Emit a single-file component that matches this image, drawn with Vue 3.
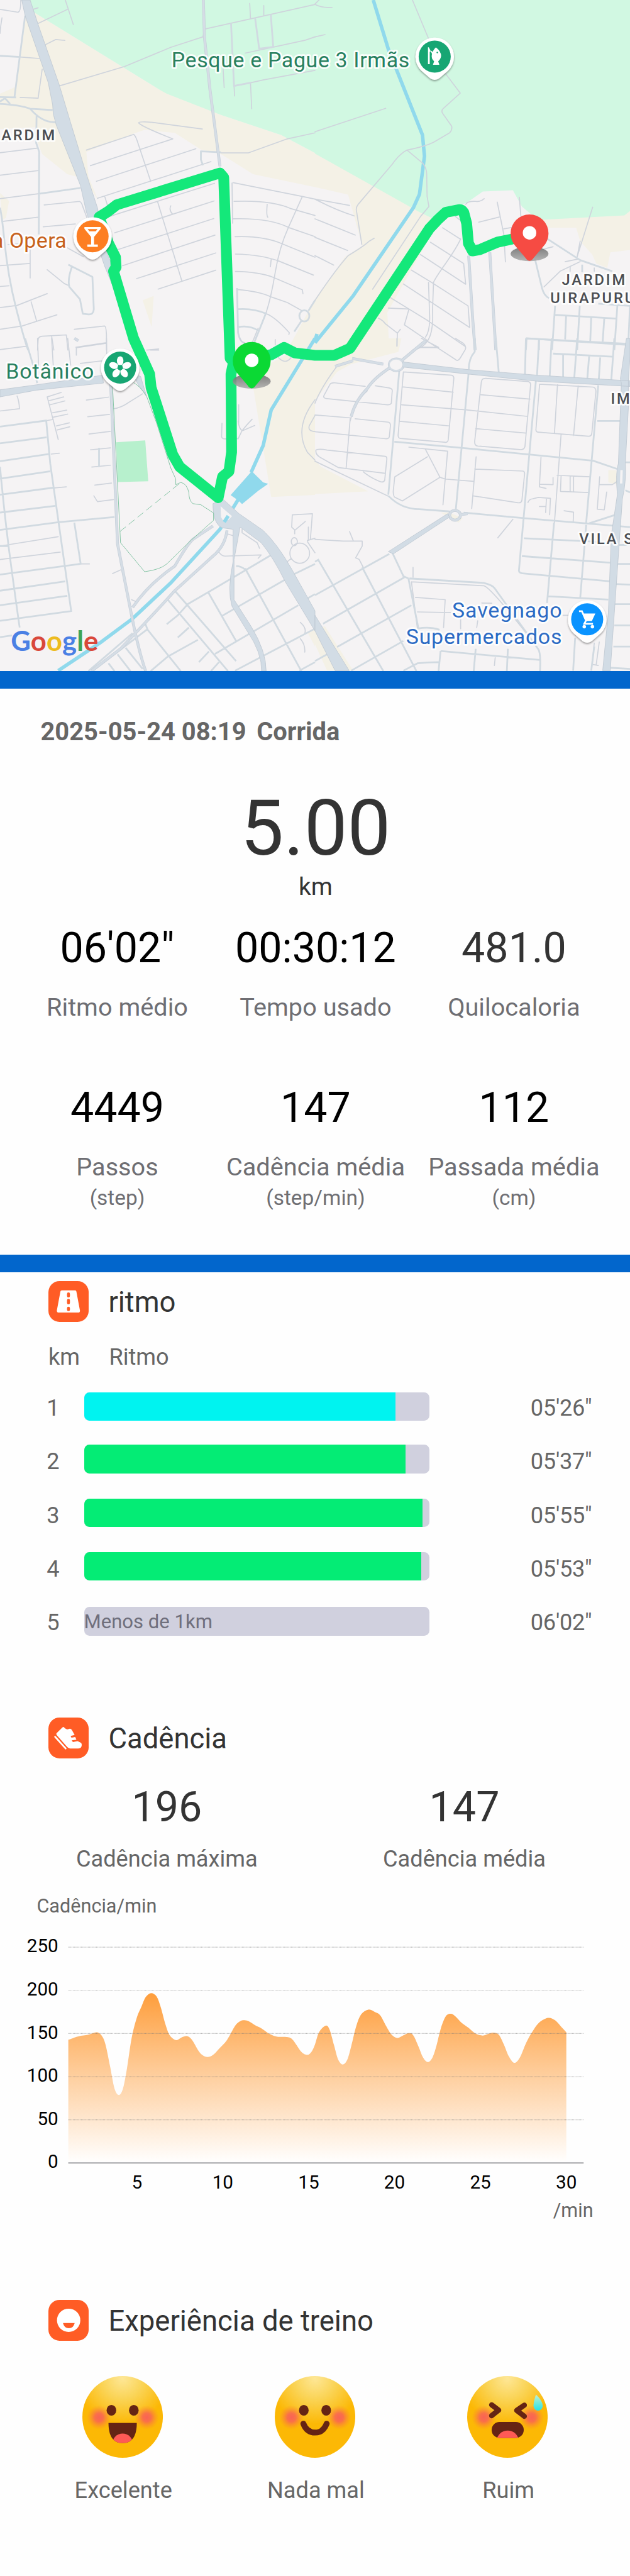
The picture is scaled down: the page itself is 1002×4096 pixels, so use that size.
<script setup>
const TILE_X = 1568 / 540
const TILE_Y = 1568 / 600

// Street network, split into four quadrants with their own drawing grid.
const quadrants = [
  {
    x: 0, y: 0,
    beige: 'M130 60L160 50L250 100L800 405L1100 515L1400 605L1568 685V838L1260 780L1100 690L1000 670L870 595L720 582L660 600L430 680L440 790L490 900L420 800L335 780L210 690L188 640L180 570L0 578V420L75 390L110 200Z M0 865L45 900L30 975L12 985Z M710 1345L765 1325L755 1465Z M1430 1568L1568 1340V1568Z',
    green: 'M150 0L160 50L250 100L800 405L830 420L1100 515L1400 605L1568 685V0Z',
    park: '',
    water: '', pond: '',
    thin: 'M0 42L90 55Q105 50 103 0M325 0L365 110M190 105L335 42M165 42L190 35M220 203L278 177L323 181M298 384L620 298L850 212L1010 165L1020 130L1270 80L1568 20M1243 15L1247 85M1313 25V70M1220 238L1365 210L1520 180L1568 165M1165 385L1250 370L1310 358L1568 315M1110 300L1116 393M1165 385L1168 430M1247 372L1253 487M690 550Q692 543 760 548L1007 578M690 550Q700 565 860 622L450 742M430 672L665 602Q675 605 690 650L750 812M480 812L975 666M485 888L1050 724M522 882L535 920M550 968L1068 821M570 1043L1066 900M590 1117L1064 979M610 1190L1070 1053M680 1248L1074 1133M787 1295L1074 1210M785 905L905 1258M850 922Q840 940 858 958M1160 818L1505 880L1568 892M1155 820L1158 1000M1165 902Q1350 895 1450 935L1568 965M1505 880L1435 1020Q1390 1110 1370 1220T1325 1400M1160 980Q1340 975 1440 1020L1568 1060M1170 1060Q1310 1055 1405 1092L1568 1152M1172 1138Q1300 1140 1390 1170L1560 1232M1172 1216Q1290 1218 1360 1242L1505 1298L1508 1315M1180 1297Q1290 1305 1350 1330L1430 1355L1500 1390M1330 915Q1325 965 1333 973M1350 1160L1346 1195M1325 1405Q1370 1420 1440 1490L1438 1498M1100 685H1235L1430 622L1568 595M0 684L190 663M0 785L190 764M0 890L190 868M10 992L190 973M40 1095L100 1092M215 1016L375 1003M220 918L395 902Q405 903 412 925L445 1005M0 1190L150 1180M150 1110V1245M0 1283L45 1280M0 1378L85 1368L235 1315M155 1352L182 1437M0 1475L110 1460L283 1410M235 1208L320 1270L340 1278M370 1475L520 1460Q528 1460 530 1500V1568M187 1568L190 1520Q193 1507 210 1506L330 1500L338 1568M257 1506L268 1568M378 1555L530 1535M190 440L100 436M190 438L210 310M100 255L195 262M335 1110L415 1150M1255 1536L1285 1470M750 1568H790M10 80Q2 120 0 150',
    minor: 'M125 70L72 435M0 250L100 255M0 435L80 436M25 440L50 465M0 455L25 440M0 465Q100 470 150 487L262 493M150 487Q210 550 275 547M182 520L180 640L195 680L193 1050M193 868L400 842M1150 105L1165 385L1250 370M1270 82L1290 218L1360 210L1348 65M1100 682L1000 678V715L1010 740M340 1185L460 1240L467 1385Q465 1410 440 1408L412 1405L398 1340L345 1285Q335 1250 360 1190M0 930Q10 970 22 1080Q40 1240 80 1380T140 1568M1180 1290L1185 1490Q1195 1535 1220 1536M1325 1400Q1290 1480 1265 1535M1185 1385Q1260 1380 1325 1405M1185 1465Q1240 1455 1285 1480M1490 1415A25 25 0 1 1 1540 1415A25 25 0 1 1 1490 1415M1535 1392L1568 1345M1500 1438L1465 1485',
    road: 'M1012 0L1018 170L1045 400L1095 745',
    highway: 'M108 0H150L190 110L295 380L350 545L430 780L485 930L530 1130L600 1270L570 1300L520 1190L430 950L400 830L280 560L265 510L262 470L240 370L125 70Z'
  },
  {
    x: 540, y: 0,
    beige: 'M0 680L520 945L592 980L560 1080L360 1400L370 1568H0V1340L150 1150L235 1100L165 872L0 838Z M1100 984L1150 1020H1300L1320 1080L1380 1140L1400 1180L1455 1200L1470 1130L1568 1120V945Z',
    green: 'M0 0V688L520 950L590 980L760 905L835 858L985 852L1030 925L1110 985L1540 965L1568 945V0Z',
    park: '',
    water: 'M290 0L365 220L535 605L545 700L520 870L490 930L190 1325L0 1535', pond: '',
    thin: 'M485 0L580 205M650 330L723 417L640 485Q625 495 637 510L680 565Q685 580 670 595L590 637Q550 655 458 672M458 672Q420 690 385 735L215 915Q203 930 206 942L233 1095M458 672L535 730Q555 750 556 780L558 880L567 925L525 970L287 1295M295 1067L270 1080Q240 1105 165 1145Q100 1210 0 1345M0 590L352 485M0 165L50 155M0 18L20 0M0 20Q30 35 85 34M0 892L172 920M0 892Q100 940 195 967M0 980L200 1053M0 1063L162 1122M0 1145L93 1187M750 915Q760 900 800 902Q825 905 842 890M815 995L917 972M907 905L940 1050L948 1173M940 1025L985 1018M1017 883L1025 970M700 970L720 985M635 1020L725 1072M575 1085L740 1180L750 1273L525 1140M480 1210L580 1265L762 1370L770 1467L440 1272M370 1330L560 1435L745 1550M365 1380L468 1384L445 1455L560 1525M315 1425Q340 1435 350 1450L410 1492L425 1475M410 1492L408 1550M725 1070Q705 1110 650 1180T590 1265L585 1390Q590 1480 565 1520T485 1568M565 1265L570 1400Q575 1480 550 1510M1382 928L1305 1150M1320 1080L1305 1150M1185 1105Q1100 1120 1090 1150M1245 1172L1310 1160M1140 1285L1220 1215L1320 1172M1270 1195V1215M1390 1200V1215M520 1555L615 1557',
    minor: 'M1140 1060L1320 1165L1480 1215M1095 1160L1130 1290Q1140 1325 1165 1335M1330 1185V1220M1195 1370L1180 1568M1318 1370L1305 1568M1505 1370L1490 1568M1195 1410L1500 1427M1250 1415L1245 1520M1375 1420L1370 1530M1440 1425L1432 1530M1050 1568L1053 1515L1568 1545M1115 1520V1568M1410 1360L1568 1370M1568 1370L1558 1568',
    road: 'M765 1145L785 1430L797 1568M870 1130L900 1568',
    highway: ''
  },
  {
    x: 0, y: 580,
    beige: 'M1350 110L1568 0V701L1350 710L1255 190Z M1530 1315L1568 1300V1380Z',
    green: '',
    park: 'M578 465L723 457L738 640L587 643Z',
    water: 'M1568 0L1350 320L1310 480L1250 600M1190 715L1095 855L850 1095L660 1255L500 1362L290 1488',
    pond: 'M1148 702L1253 595L1310 645L1335 651L1285 683L1205 742L1185 725Z',
    thin: 'M0 50L130 35M187 0L192 130M257 0L265 120M337 0L352 120M380 75V42L528 22M530 0L533 165M400 112L533 98M0 325L97 315Q95 280 85 258M305 242L235 262L290 453M240 280L317 262M250 297L323 280M262 333L332 321M265 353L337 339M280 392L345 378M285 410L347 396M430 276L540 263M437 351L545 340M443 428L550 416M450 499L550 490M457 576L550 568M472 657L555 648M467 705L485 731L565 722M255 518L295 514M270 670L330 665M232 368L265 363M390 1010L445 1010M560 1053L600 1037M565 315Q605 310 640 287L710 248M1188 297V380M1105 380L1103 440Q1105 450 1122 450L1185 448M1185 370Q1190 405 1205 413Q1230 385 1255 362M1205 413L1185 450M1208 413L1268 390M1568 275Q1460 400 1530 510L1568 545M1568 345L1540 390Q1530 415 1568 417M1455 790L1555 785L1545 900M1520 820L1467 860V875M1455 790L1452 845L1467 858M1535 845V905M1450 910A15 18 0 1 0 1480 910A15 18 0 1 0 1450 910M1443 962A49 45 0 1 0 1541 962A49 45 0 1 0 1443 962M1430 1000L1450 985M1530 905L1568 895M1530 910L1568 960M1205 855V870L1280 915L1292 940M1085 950Q1100 975 1120 975L1300 970L1285 985M1370 5V30M1385 85Q1420 120 1450 85M730 52L790 47M0 930L290 888M0 990L300 957M1495 1272Q1530 1300 1515 1325M1495 1345Q1520 1370 1517 1405M655 1170L680 1180M1130 875L1165 885M1195 0Q1195 20 1240 25',
    minor: 'M125 0L165 120L185 200M0 395L230 368L250 560L355 1225M0 470L232 443M0 550L250 517M0 628L250 595M0 700L270 668M0 780L275 750M0 858L290 823L570 800M0 1058L400 1010M370 825L402 1012M0 1130L325 1088M0 1195L335 1153M0 1265L350 1222M0 1338L60 1330M0 575Q25 820 60 1050T98 1295M0 930H40M493 490V576M440 1490L660 1320M460 1490L730 1305M720 1270L735 1305L900 1490M585 1415L650 1490M540 1455L570 1490M625 1385L710 1480M750 1490L835 1425L985 1350M830 1165L1135 1490M870 1130L1175 1445M830 1280L885 1240L935 1190L1040 1135L1350 970M885 1340L940 1295M990 1450L1040 1402M1050 1490L1090 1450M1035 1135L1175 1355M1220 1030L1500 1490M1105 1243L1420 1080M1070 1413L1485 1195M1170 1488L1568 1300M1465 1055L1568 1010M1520 1170L1568 1145M1490 1488L1568 1450M1175 1020Q1200 1020 1220 1035',
    road: 'M550 180L585 920Q620 1080 655 1240T725 1490M660 1205Q740 1100 870 1020Q930 925 960 900L1060 840M455 1490L600 1390Q760 1240 870 1130L1060 975Q1120 930 1130 860M370 0L390 10',
    highway: 'M0 230L180 208L510 165L515 200L180 232L0 262Z M1060 740L1110 720L1190 785L1310 860Q1380 920 1450 1030L1568 1220V1310L1420 1090Q1360 980 1300 915L1195 845L1165 990L1165 1170L1250 1290Q1325 1400 1325 1490H1302Q1305 1410 1230 1310L1155 1200Q1130 1130 1160 1000V855L1105 848Q1060 830 1060 740Z M660 160L700 170L730 260L690 210Z',
    light: 'M1098 752L1155 796L1138 812L1112 818L1100 800Z',
    creek: 'M1136 795L1116 822'
  },
  {
    x: 540, y: 580,
    beige: 'M0 0H430L415 60L180 115L110 150L0 280Z M0 545L30 575L265 685L0 697Z M1460 590L1500 590L1505 655L1460 645Z M50 1290L190 1488H60L0 1370V1300Z M625 780L670 780L735 805L715 825Z',
    green: '', park: '', pond: '',
    water: 'M0 10L10 -20',
    thin: 'M408 0V35M555 10L700 95Q712 105 725 85L748 50Q755 35 735 20L700 0M525 40H615L530 0M0 290Q30 220 105 130M75 205Q80 198 100 199L250 215M300 212L370 222Q388 225 384 240L380 290Q375 298 360 297L60 270Q38 268 45 255L75 205M0 343L178 356M200 360L365 375Q378 378 375 395L370 440Q368 450 350 449L0 418M175 360L155 580M260 235Q200 280 175 370M5 500Q0 520 30 535L115 578L350 604M5 500Q20 493 60 500L350 528Q360 530 357 545L347 635Q340 648 320 640Q270 620 240 597M0 550L365 707M440 150L680 165Q692 168 691 180L663 455Q660 468 645 465L425 448Q412 446 414 430L440 150M435 217L688 241M430 297L750 320L1055 349M422 371L670 392M828 195Q830 178 850 179L1060 193Q1075 196 1073 210L1045 485Q1040 500 1020 498L810 482Q793 480 795 460L828 195M825 252L1070 272M800 404L1050 424M1118 205L1385 218Q1400 222 1398 240L1378 425Q1375 440 1360 438L1110 420Q1098 418 1100 405L1118 205M1207 208L1192 425M1310 213L1287 435M1225 430L1192 825M467 487L660 505L637 745M550 497L622 622L435 728L395 710Q388 700 390 680L397 620L560 530M622 622L648 630L790 640M802 530L780 762M795 585L1035 594Q1045 596 1043 610L1030 725Q1027 738 1010 736L785 705M985 810L910 893M1125 533L1117 665L1150 672M1117 653L1185 655V623M1205 613L1368 620M1225 615L1222 685L1360 690M1270 618V685M1287 618V688M1060 735Q1065 720 1085 718L1112 712L1172 716L1168 790M1152 718L1148 780M1117 753H1150M1240 772L1287 778L1285 825M1417 620L1405 765L1440 768L1452 688M1417 655L1480 655L1505 640M172 865L190 905M0 900L140 908L235 908V930L202 983L220 990L240 1025M488 1025V1070M500 1160L648 1170L640 1295M510 1225L675 1228M480 1090L840 1108Q870 1112 1060 1330M480 1090L510 1300M725 1245V1300M810 1265L805 1295M830 1185L880 1186M897 1430L893 1465M1390 1365L1380 1460L1410 1465M1415 1360L1400 1460M1235 1240H1260',
    minor: 'M797 0L795 60Q765 90 765 140M900 0L915 155M1050 0L1045 165M1115 5L1105 170M1178 0L1168 175M1235 70V175M1305 0L1290 185M1365 75L1355 185M1420 85L1412 190M1490 0L1475 185M1050 0L1568 25M1185 68L1480 82M1405 370L1520 370M1410 210L1350 825M420 140L365 700M395 463L730 490L1385 548L1505 585M765 150L700 775M1100 185L1015 1040Q1015 1052 1040 1053L1470 1088M365 705Q430 765 520 765L670 775M740 780L1040 805L1568 845M1365 828L1495 790M1040 895L1500 915M1030 975L1475 1005M1190 825L1155 1185M1350 835L1320 1165M1160 1155L1460 1170M1500 925H1568M1500 1010H1568M1495 1100L1568 1103M1490 1190H1568M1490 1285H1568M1485 1380H1568M1470 1475L1568 1480M0 1150L370 965M385 960L440 1065L465 1075M470 1075L840 1095Q885 1105 895 1120L1110 1390Q1125 1405 1120 1490M465 1075L515 1300M15 990L340 1490M0 1000L20 990M235 1025L505 1490M40 1278L445 1070M110 1382L480 1195M0 1445L60 1415M180 1488L440 1355M440 1488L510 1455Q560 1450 615 1450M615 1490L625 1400M625 1400L1120 1440M800 1390L790 1490M960 1390L955 1490M510 1300Q570 1290 620 1305M1295 1340L1285 1488M1390 1380L1375 1488M1545 555H1568M1545 680L1568 690',
    road: 'M185 90L340 115M435 115L560 125M375 130Q290 180 260 225Q200 280 180 350M430 100L550 10M100 125L190 100M370 118A35 26 0 1 1 440 118A35 26 0 1 1 370 118M670 792A27 22 0 1 1 724 792A27 22 0 1 1 670 792M720 790L760 785',
    highway: 'M435 105L765 140L1110 165L1568 190V215L1110 192L765 160L435 128Z M0 1240L170 1488H100L0 1310Z M365 955L660 785L670 800L390 965Z M1550 0H1568V80L1560 190V310L1545 560Q1550 640 1530 720L1490 1230L1470 1488H1432L1460 1230L1475 880L1505 700Q1495 600 1510 560L1525 200L1520 180Z',
    light: 'M1520 590L1532 590L1530 650L1518 650Z M372 118A32 23 0 1 1 436 118A32 23 0 1 1 372 118Z'
  }
]

const tileTransform = q => `translate(${q.x} ${q.y}) scale(${1 / TILE_X} ${1 / TILE_Y})`

const route = 'M877 410L853 415L822 428L810 430L803 417L800 383L795 364Q791 358 784 360L764 364L750 377L736 392L600 597L573 609H540L506 605L487 595.5L465 608L430 613M400 622L396 641L397 775L392.5 808L381.5 817L374 853L308 800L296 779L259 664L256.5 641L229 580L194.600 465L199 458L198 441L186 417L170 372L186 362L200 351L377 296.500L383.500 304L394 600L394.500 614L400 620'

const pois = [
  { x: 745.2, y: 97, color: '#17a673', kind: 'fish' },
  { x: 158.7, y: 405, color: '#fd7e22', kind: 'bar' },
  { x: 206, y: 630, color: '#17a673', kind: 'flower' },
  { x: 1006.6, y: 1061.500, color: '#0a93ff', kind: 'cart' }
]

const markers = [
  { x: 431.5, y: 619.500, color: '#0bd934' },
  { x: 907.8, y: 401, color: '#f64b43' }
]

const primary = [
  { value: `06'02"`, label: 'Ritmo médio' },
  { value: '00:30:12', label: 'Tempo usado' },
  { value: '481.0', label: 'Quilocaloria', soft: true }
]
const secondary = [
  { value: '4449', label: 'Passos', unit: '(step)' },
  { value: '147', label: 'Cadência média', unit: '(step/min)' },
  { value: '112', label: 'Passada média', unit: '(cm)' }
]

const laps = [
  { n: 1, time: `05'26"`, pct: 90.15, color: '#00f3f0' },
  { n: 2, time: `05'37"`, pct: 93.2, color: '#04ec75' },
  { n: 3, time: `05'55"`, pct: 98.1, color: '#04ec75' },
  { n: 4, time: `05'53"`, pct: 97.6, color: '#04ec75' },
  { n: 5, time: `06'02"`, pct: 0, color: 'transparent', note: 'Menos de 1km' }
]

const samples = [
  [340, 627], [390, 610], [440, 602], [480, 590], [505, 605], [525, 650], [548, 760], [570, 870], [592, 902], [612, 870],
  [632, 770], [655, 620], [680, 520], [705, 460], [725, 415], [752, 395], [780, 412], [800, 465], [825, 555], [845, 605],
  [876, 629], [905, 615], [930, 609], [955, 627], [990, 685], [1010, 705], [1033, 713], [1060, 703], [1090, 672], [1130, 628],
  [1170, 558], [1195, 535], [1217, 530], [1240, 536], [1270, 555], [1300, 570], [1340, 597], [1380, 612], [1420, 613], [1455, 625],
  [1500, 687], [1530, 702], [1550, 688], [1568, 650], [1588, 590], [1620, 557], [1640, 575], [1663, 655], [1683, 725], [1706, 750],
  [1728, 728], [1748, 660], [1773, 560], [1798, 500], [1834, 477], [1868, 490], [1893, 506], [1923, 560], [1948, 600], [1978, 618],
  [2008, 605], [2036, 594], [2058, 606], [2083, 660], [2106, 715], [2130, 738], [2153, 715], [2173, 655], [2193, 575], [2218, 512],
  [2244, 498], [2268, 512], [2298, 543], [2333, 568], [2368, 597], [2403, 606], [2433, 597], [2458, 592], [2483, 602], [2508, 650],
  [2533, 710], [2560, 742], [2588, 715], [2618, 645], [2648, 590], [2683, 542], [2728, 518], [2763, 530], [2793, 562], [2819, 590]
]

function smooth(points) {
  let d = `M${points[0].join(' ')}`
  for (let i = 0; i < points.length - 1; i++) {
    const p0 = points[i - 1] || points[i]
    const p1 = points[i]
    const p2 = points[i + 1]
    const p3 = points[i + 2] || p2
    d += `C${p1[0] + (p2[0] - p0[0]) / 6} ${p1[1] + (p2[1] - p0[1]) / 6} ${p2[0] - (p3[0] - p1[0]) / 6} ${p2[1] - (p3[1] - p1[1]) / 6} ${p2[0]} ${p2[1]}`
  }
  return d
}
const area = `${smooth(samples)}V1240H340Z`

const yTicks = [250, 200, 150, 100, 50, 0].map((v, i) => ({ v, y: 47.6 + i * 73.96 }))
const xTicks = [5, 10, 15, 20, 25, 30].map(v => ({ v, x: 117 + (v - 1) * 29.44 }))

const moods = [
  { id: 'great', label: 'Excelente' },
  { id: 'ok', label: 'Nada mal' },
  { id: 'bad', label: 'Ruim' }
]
</script>

<template>
  <main class="page">
    <svg class="map" viewBox="0 0 1080 1150" preserveAspectRatio="none">
      <defs>
        <linearGradient id="pinShade" x1="0" y1="0" x2="0" y2="1">
          <stop offset="0" stop-color="#666" />
          <stop offset="1" stop-color="#aaa" />
        </linearGradient>
        <filter id="drop" x="-30%" y="-30%" width="160%" height="170%">
          <feDropShadow dx="0" dy="2" stdDeviation="2" flood-color="#000" flood-opacity=".4" />
        </filter>
      </defs>
      <rect width="1080" height="1150" fill="#f5f3f4" />
      <g v-for="(q, i) in quadrants" :key="'l' + i" :transform="tileTransform(q)">
        <path :d="q.beige" fill="#f4f1e6" />
        <path :d="q.green" fill="#d1f8e2" />
        <path :d="q.park" fill="#b7f0cd" />
      </g>
      <g v-for="(q, i) in quadrants" :key="'s' + i" :transform="tileTransform(q)" class="lines">
        <path :d="q.water" class="water" />
        <path :d="q.pond" fill="#90d9ec" />
        <path :d="q.thin" class="thin" />
        <path :d="q.minor" class="minor" />
        <path :d="q.road" class="road-edge" />
        <path :d="q.road" class="road" />
        <path :d="q.highway" class="highway" />
        <path v-if="q.light" :d="q.light" fill="#f5f3f4" />
        <path v-if="q.creek" :d="q.creek" class="water" />
      </g>
      <g :transform="tileTransform(quadrants[2])" class="lines">
        <path class="trail" d="M560 210L600 915L720 1045Q800 1035 830 1010L950 905L1063 815V782L1000 745L960 740Q940 725 940 690Q930 650 900 645L875 655V630L850 580L780 380L730 260Q700 215 665 198" />
        <path class="trail dash" d="M597 865L900 645" />
      </g>

      <path :d="route" class="route" />

      <g v-for="m in markers" :key="m.color" :transform="`translate(${m.x} ${m.y})`">
        <ellipse cy="34" rx="32.500" ry="12.500" fill="url(#pinShade)" opacity=".85" />
        <path d="M0 46Q-4 46-7 41L-23 22A32.500 32.500 0 1 1 23 22L7 41Q4 46 0 46Z" :fill="m.color" />
        <circle r="11.600" cy="-2" fill="#fff" />
      </g>

      <g v-for="p in pois" :key="p.kind + p.x" :transform="`translate(${p.x} ${p.y})`">
        <path filter="url(#drop)" d="M-8 37L-23 24A33 33 0 1 1 23 24L8 37Q0 43-8 37Z" fill="#fff" />
        <circle r="27.500" :fill="p.color" />
        <g v-if="p.kind === 'fish'" fill="#fff">
          <path d="M-11.500-16V13H-8.500V-8L-5-10L-2-4L-3-1Q-5-6-10-16Z" />
          <path d="M2-16Q11-9 11-1Q10 5 6 8L8 14H-3L-1 8Q-6 4-5-3Q-4-10 2-16Z" />
          <circle cx="4.500" cy="-7" r="1.300" fill="#17a673" />
        </g>
        <g v-else-if="p.kind === 'bar'" fill="#fff">
          <path d="M-14-16H14V-13L2.500 1V14H9V18H-9V14H-2.500V1L-14-13ZM-8.500-12.500L-5.500-8.500H5.500L8.500-12.500Z" fill-rule="evenodd" />
        </g>
        <g v-else-if="p.kind === 'flower'" fill="#fff">
          <ellipse v-for="a in 5" :key="a" cy="-11.500" rx="5.600" ry="8" :transform="`rotate(${(a - 1) * 72})`" />
          <circle r="4.600" fill="#17a673" />
        </g>
        <g v-else fill="none" stroke="#fff" stroke-width="3">
          <path d="M-14-14H-9L-2 2L-5 7.500H10" />
          <path d="M-7-10H14L8 3H-2Z" fill="#fff" stroke="none" />
          <circle cx="-5" cy="12.500" r="3" fill="#fff" stroke="none" />
          <circle cx="9" cy="12.500" r="3" fill="#fff" stroke="none" />
        </g>
      </g>

      <g class="place">
        <text x="294" y="115.600" textLength="408" fill="#28805f">Pesque e Pague 3 Irmãs</text>
        <text x="114" y="424.800" text-anchor="end" textLength="128" fill="#c7611c">a Opera</text>
        <text x="161" y="649" text-anchor="end" textLength="151" fill="#28805f">Botânico</text>
        <text x="963" y="1058.400" text-anchor="end" textLength="188" fill="#2c6bc4">Savegnago</text>
        <text x="963" y="1103.500" text-anchor="end" textLength="267" fill="#2c6bc4">Supermercados</text>
      </g>
      <g class="district">
        <text x="2.500" y="240.500">ARDIM</text>
        <text x="963" y="488">JARDIM</text>
        <text x="943.500" y="519.500">UIRAPURU</text>
        <text x="1047" y="691.500">IM</text>
        <text x="993" y="932">VILA S</text>
      </g>
      <text class="google" x="18.500" y="1115.800" textLength="150"><tspan fill="#4a80e4">G</tspan><tspan fill="#d9483b">o</tspan><tspan fill="#edbb20">o</tspan><tspan fill="#4a80e4">g</tspan><tspan fill="#3ba457">l</tspan><tspan fill="#d9483b">e</tspan></text>
    </svg>
    <div class="divider"></div>

    <section class="summary">
      <p class="date"><span>2025-05-24 08:19</span><span>Corrida</span></p>
      <p class="distance">5.00</p>
      <p class="unit">km</p>
      <div class="stats first">
        <div v-for="s in primary" :key="s.label" class="stat">
          <div class="value" :class="{ soft: s.soft }">{{ s.value }}</div>
          <div class="label">{{ s.label }}</div>
        </div>
      </div>
      <div class="stats second">
        <div v-for="s in secondary" :key="s.label" class="stat">
          <div class="value">{{ s.value }}</div>
          <div class="label">{{ s.label }}</div>
          <div class="sub">{{ s.unit }}</div>
        </div>
      </div>
    </section>
    <div class="divider"></div>

    <section class="pace">
      <header class="head">
        <svg class="badge" viewBox="0 0 69 70">
          <rect width="69" height="70" rx="19" fill="#ff5c25" />
          <path d="M23 16H46Q47.500 16 48 18L54 50Q54.500 54 51 54H18Q14 54 14.500 50L20.500 18Q21 16 23 16Z" fill="#fff" />
          <path d="M34.400 22V25.500M34.400 33V37.500M34.400 46.500V49" stroke="#ff5c25" stroke-width="5" stroke-linecap="round" />
        </svg>
        <h2>ritmo</h2>
      </header>
      <div class="lap-head"><span>km</span><span>Ritmo</span></div>
      <div v-for="lap in laps" :key="lap.n" class="lap">
        <span class="num">{{ lap.n }}</span>
        <div class="bar">
          <div class="fill" :style="{ width: lap.pct + '%', background: lap.color }"></div>
          <span v-if="lap.note" class="note">{{ lap.note }}</span>
        </div>
        <span class="time">{{ lap.time }}</span>
      </div>
    </section>

    <section class="cadence">
      <header class="head">
        <svg class="badge" viewBox="0 0 69 70">
          <rect width="69" height="70" rx="19" fill="#ff5c25" />
          <path d="M24 17Q26 15 28 18Q31 21 34 20Q38 18 40 21L45 30L38 31.500L39.500 34.500L46 33.500L48 38L40 39L42 42L50 40.500L56 43.500Q58 46 56.500 50Q55 53 51 53H37Q34 53 31 49L15 31Q12 28 15 26Z" fill="#fff" />
          <path d="M11.500 33L29.500 53" stroke="#fff" stroke-width="3" stroke-linecap="round" />
        </svg>
        <h2>Cadência</h2>
      </header>
      <div class="pair">
        <div class="stat"><div class="value soft">196</div><div class="small">Cadência máxima</div></div>
        <div class="stat"><div class="value soft">147</div><div class="small">Cadência média</div></div>
      </div>
      <p class="axis-name">Cadência/min</p>
      <svg class="chart" viewBox="0 0 1080 477" preserveAspectRatio="none">
        <defs>
          <linearGradient id="areaFill" gradientUnits="userSpaceOnUse" x1="0" y1="380" x2="0" y2="1240">
            <stop offset="0" stop-color="#fe9c38" />
            <stop offset=".5" stop-color="#fecf9f" />
            <stop offset="1" stop-color="#fff" />
          </linearGradient>
        </defs>
        <path :d="area" fill="url(#areaFill)" transform="translate(0 -9.700) scale(.34439)" />
        <g v-for="t in yTicks" :key="t.v">
          <line x1="117" x2="1000.500" :y1="t.y" :y2="t.y" :class="t.v ? 'grid' : 'base'" />
          <text x="100" :y="t.y + 8.800" text-anchor="end">{{ t.v }}</text>
        </g>
        <text v-for="t in xTicks" :key="'x' + t.v" :x="t.x" y="461" text-anchor="middle">{{ t.v }}</text>
      </svg>
      <p class="axis-unit">/min</p>
    </section>

    <section class="feeling">
      <header class="head">
        <svg class="badge" viewBox="0 0 69 70">
          <rect width="69" height="70" rx="19" fill="#ff5c25" />
          <circle cx="34.700" cy="35" r="20" fill="#fff" />
          <path d="M25 39.500H45Q43 48.500 35 48.500T25 39.500Z" fill="#ff5c25" />
        </svg>
        <h2>Experiência de treino</h2>
      </header>
      <div class="moods">
        <div v-for="m in moods" :key="m.id" class="mood">
          <svg class="face" viewBox="0 0 138 140" preserveAspectRatio="none">
            <defs>
              <radialGradient :id="'f' + m.id" gradientUnits="userSpaceOnUse" cx="69" cy="4" r="78">
                <stop offset="0" stop-color="#fee796" />
                <stop offset=".45" stop-color="#fad457" />
                <stop offset="1" stop-color="#fcb805" />
              </radialGradient>
              <radialGradient :id="'c' + m.id">
                <stop offset="0" stop-color="#f96355" />
                <stop offset=".35" stop-color="#f96355" stop-opacity=".85" />
                <stop offset="1" stop-color="#fb8a2a" stop-opacity="0" />
              </radialGradient>
              <linearGradient :id="'d' + m.id" x1="0" y1="0" x2="0" y2="1">
                <stop offset="0" stop-color="#c2f0d0" />
                <stop offset="1" stop-color="#27e3e6" />
              </linearGradient>
              <clipPath :id="'m' + m.id">
                <path v-if="m.id === 'great'" d="M44.800 80.300H93.300C93.300 102 86 115 69 115S44.800 102 44.800 80.300Z" />
                <rect v-else x="42" y="78.700" width="55" height="27.500" rx="13.500" />
              </clipPath>
            </defs>
            <ellipse cx="69" cy="70" rx="69" ry="70" :fill="`url(#f${m.id})`" />
            <circle cx="28.500" cy="71" r="21" :fill="`url(#c${m.id})`" />
            <circle cx="110.500" cy="71" r="21" :fill="`url(#c${m.id})`" />
            <g v-if="m.id !== 'bad'" fill="#652414">
              <ellipse cx="49.800" cy="58.700" rx="8.300" ry="9.200" />
              <ellipse cx="88.200" cy="58.700" rx="8.300" ry="9.200" />
            </g>
            <g v-if="m.id === 'great'" :clip-path="`url(#m${m.id})`">
              <rect x="40" y="78" width="60" height="40" fill="#652414" />
              <ellipse cx="69" cy="117" rx="18" ry="18.500" fill="#ff5a55" />
            </g>
            <path v-if="m.id === 'ok'" d="M49 81.700C53 92 60 97 69 97S85 92 89 81.700" fill="none" stroke="#652414" stroke-width="10" stroke-linecap="round" />
            <g v-if="m.id === 'bad'">
              <path d="M42 49.500L54 58.500L42 68M98 50L85 59L98 69" fill="none" stroke="#652414" stroke-width="9" stroke-linecap="round" stroke-linejoin="round" />
              <g :clip-path="`url(#m${m.id})`">
                <rect x="40" y="78" width="60" height="30" fill="#652414" />
                <ellipse cx="69.500" cy="112" rx="19" ry="18.500" fill="#ff5a55" />
              </g>
              <path d="M118 31.700Q130 43 129.500 52Q128 59.300 121.500 59.300T113.600 51Q114 42 118 31.700Z" :fill="`url(#d${m.id})`" />
            </g>
          </svg>
          <div class="small">{{ m.label }}</div>
        </div>
      </div>
    </section>
  </main>
</template>

<style>
/* 1rem stands for 100 design units of the 1080-wide layout */
html { font-size: 92.7778px; }
body { margin: 0; background: #fff; font-size: .4rem; }
</style>

<style scoped>
.page {
  width: 10.8rem;
  height: 44.15rem;
  overflow: hidden;
  background: #fefefe;
  font-family: Roboto, "Noto Sans", sans-serif;
  color: #333;
}
p, h2 { margin: 0; font-weight: 400; }
svg { display: block; }

.map { width: 10.8rem; height: 11.5rem; }
.lines path { vector-effect: non-scaling-stroke; }
.water { fill: none; stroke: #90d9ec; stroke-width: 5.6px; }
.thin { fill: none; stroke: #cfd4dc; stroke-width: 1.7px; stroke-linejoin: round; stroke-linecap: round; }
.minor { fill: none; stroke: #d1dae1; stroke-width: 2.8px; stroke-linejoin: round; }
.road-edge { fill: none; stroke: #c6cfd9; stroke-width: 4.6px; }
.road { fill: none; stroke: #d5dde5; stroke-width: 3.2px; }
.highway { fill: #d2dce5; stroke: #bcc6d0; stroke-width: .8px; }
.trail { fill: none; stroke: #86c5a6; stroke-width: 1px; }
.dash { stroke-dasharray: 12 6; }
.route { fill: none; stroke: #14e87a; stroke-width: 18.500px; stroke-linejoin: round; stroke-linecap: round; }
.place text, .district text { paint-order: stroke; stroke: #fff; stroke-width: 6px; stroke-linejoin: round; stroke-opacity: .9; }
.place text { font-size: 36.500px; }
.district text { font-size: 25.500px; font-weight: 500; letter-spacing: 3.100px; fill: #4b4d52; }
.google { font-family: Lato, sans-serif; font-size: 47px; font-weight: 700; }

.divider { height: .3rem; background: #0266cc; }

.summary { height: 9.7rem; box-sizing: border-box; padding: .447rem .29rem 0 .31rem; text-align: center; }
.date { display: flex; gap: .18rem; padding-left: .385rem; font-size: .43rem; line-height: .6rem; font-weight: 700; color: #666; }
.distance { margin-top: .603rem; font-size: 1.32rem; line-height: 1.5rem; }
.unit { font-size: .42rem; line-height: .5rem; }
.stats { display: grid; grid-template-columns: repeat(3, 1fr); }
.first { margin-top: .354rem; }
.second { margin-top: .984rem; }
.stat { text-align: center; white-space: nowrap; }
.value { font-size: .715rem; line-height: .9rem; color: #000; }
.value.soft { color: #333; }
.label { margin-top: .286rem; font-size: .428rem; line-height: .56rem; color: #6e6e73; }
.sub { margin-top: .016rem; font-size: .36rem; line-height: .48rem; color: #6e6e73; }

.head { display: flex; align-items: center; gap: .335rem; height: .695rem; padding-left: .833rem; }
.badge { width: .69rem; height: .7rem; }
.head h2 { padding-top: .035rem; font-size: .49rem; line-height: .6rem; color: #333; }

.pace { padding-top: .155rem; }
.lap-head { display: flex; gap: .5rem; margin: .367rem 0 .15rem; padding-left: .83rem; font-size: .39rem; line-height: .5rem; color: #666; }
.lap { display: flex; align-items: center; height: .92rem; font-size: .39rem; color: #666; }
.num { width: .64rem; padding-left: .8rem; }
.bar { display: flex; align-items: center; width: 5.92rem; height: .49rem; margin-bottom: .08rem; border-radius: .09rem; overflow: hidden; background: #d0d0de; }
.lap:nth-of-type(2) .bar, .lap:last-child .bar { margin-bottom: .04rem; }
.fill { height: 100%; }
.note { padding-top: .02rem; font-size: .335rem; line-height: .49rem; color: #6f6f7c; }
.time { margin-left: 1.735rem; letter-spacing: -.003rem; }

.cadence { padding-top: 1.173rem; }
.pair { display: grid; grid-template-columns: 1fr 1fr; margin-top: .386rem; padding: 0 .29rem 0 .31rem; }
.pair .small { margin-top: .196rem; }
.small { font-size: .39rem; line-height: .5rem; color: #666; }
.axis-name { margin-top: .34rem; padding-left: .63rem; font-size: .33rem; line-height: .44rem; color: #666; }
.chart { width: 10.8rem; height: 4.77rem; }
.chart text { font-size: 32px; fill: #000; }
.grid { stroke: #777; stroke-opacity: .6; stroke-width: 1.200px; stroke-dasharray: 1 1; }
.base { stroke: #a5a5a8; stroke-width: 2px; }
.axis-unit { padding-right: .63rem; text-align: right; font-size: .33rem; line-height: .44rem; color: #666; }

.feeling { padding-top: 1.31rem; }
.moods { display: grid; grid-template-columns: repeat(3, 1fr); margin-top: .608rem; padding: 0 .45rem; }
.mood { display: flex; flex-direction: column; align-items: center; }
.face { width: 1.38rem; height: 1.4rem; }
.mood .small { margin-top: .317rem; padding-left: .03rem; }
</style>
